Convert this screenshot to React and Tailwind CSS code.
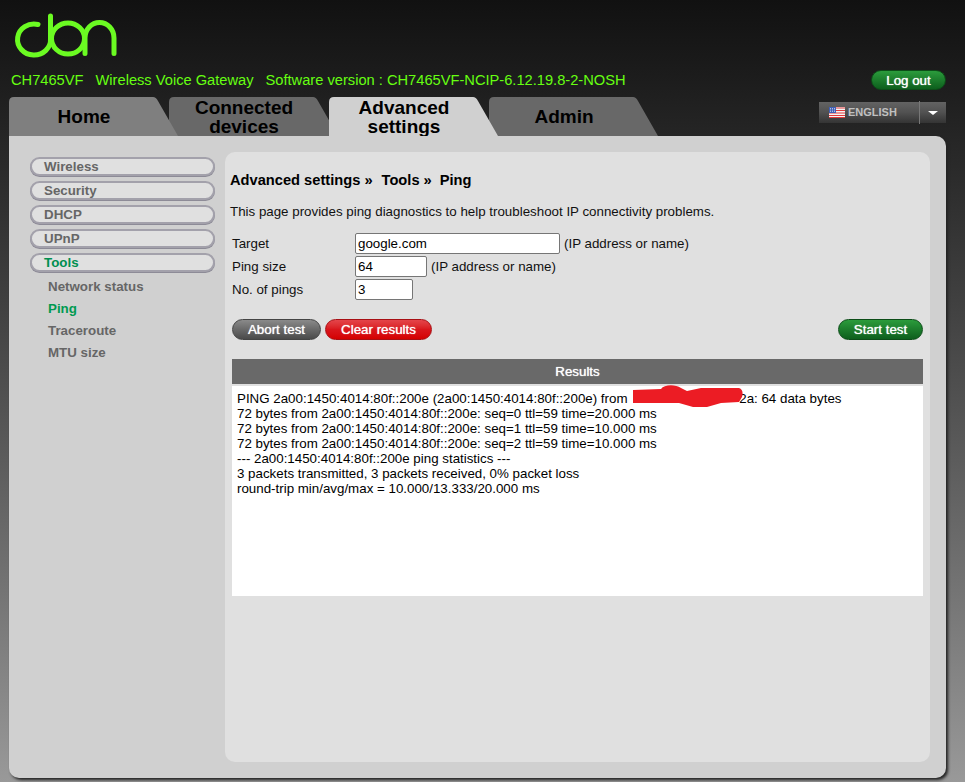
import React from "react";

const tabs = [
  { label: ["Home"], bg: "bg-[#7f7f7f]", z: "z-30" },
  { label: ["Connected", "devices"], bg: "bg-[#686868]", z: "z-20" },
  { label: ["Advanced", "settings"], bg: "bg-[#d0d0d0]", z: "z-40" },
  { label: ["Admin"], bg: "bg-[#686868]", z: "z-10" },
];

const sideItems = ["Wireless", "Security", "DHCP", "UPnP", "Tools"];
const subItems = ["Network status", "Ping", "Traceroute", "MTU size"];

const Logo = () => (
  <svg width="130" height="70" viewBox="0 0 130 70" fill="none" stroke="#6bfb22" strokeWidth="5" strokeLinecap="round">
    <path d="M38 24.5A16.5 15.5 0 1 0 50.5 38.5V16" />
    <ellipse cx="68" cy="38.5" rx="16.5" ry="15.5" />
    <path d="M85 53.5V38A14.5 15.5 0 0 1 114 38V53.5" />
  </svg>
);

const Flag = () => (
  <svg width="16" height="11" viewBox="0 0 16 11" className="shrink-0">
    <rect width="16" height="11" fill="#f4f4f4" />
    <path d="M0 1h16M0 3.5h16M0 6h16M0 8.5h16M0 10.5h16" stroke="#e0393a" strokeWidth="1.1" />
    <rect width="7" height="6" fill="#3f5fb5" />
    <path d="M1 1.5h5M1 3h5M1 4.5h5" stroke="#dfe6f5" strokeWidth="0.7" strokeDasharray="1 1" />
  </svg>
);

// red marker scribble that hides the address in the first result line
const Scribble = () => (
  <svg width="114" height="24" viewBox="0 0 114 24" className="absolute left-[399px] top-[-1px]">
    <path
      d="M2 5L30 4C33 -0.5 44 -1 50 3L56 6L70 3L108 3Q113 5 111 12L108 17L90 18L76 22L62 22L48 18L2 18Z"
      fill="#ec1c24"
    />
  </svg>
);

const PillButton = ({ className, children }) => (
  <button
    type="button"
    className={`h-[21px] rounded-full border pb-px text-[13.33px] text-white [text-shadow:0_0_1px_#fff] ${className}`}
  >
    {children}
  </button>
);

const FormRow = ({ label, value, inputWidth, hint }) => (
  <div className="flex h-[21px] items-center">
    <label className="w-[123px] text-[13.33px] text-[#111]">{label}</label>
    <input
      readOnly
      defaultValue={value}
      className={`h-[21px] rounded-[2px] border border-[#767676] bg-white px-[2px] text-[13.33px] text-black ${inputWidth}`}
    />
    {hint && <span className="ml-1 text-[13.33px] text-[#111]">{hint}</span>}
  </div>
);

export default function App() {
  return (
    <div className="h-[782px] w-full overflow-hidden bg-linear-to-b from-[#111111] to-[#999999] font-['Liberation_Sans',Arial,sans-serif]">
      <div className="h-[70px]">
        <Logo />
      </div>

      <div className="flex h-5 items-center justify-between pl-[11px] pr-[19px] text-[14.67px] text-[#66ff11]">
        <div className="flex gap-3">
          <span>CH7465VF</span>
          <span>Wireless Voice Gateway</span>
          <span>Software version : CH7465VF-NCIP-6.12.19.8-2-NOSH</span>
        </div>
        <button
          type="button"
          className="h-5 w-[75px] rounded-full border border-[#0c4d18] bg-linear-to-b from-[#2b9c3c] to-[#0d5f1d] pb-[3px] text-[13.33px] text-white [text-shadow:0_0_1px_#fff]"
        >
          Log out
        </button>
      </div>

      <div className="mt-[7px] flex h-[39px] pl-[9px] pr-[19px]">
        <div className="flex">
          {tabs.map((tab) => (
            <div
              key={tab.label[0]}
              className={`relative -mr-[9px] h-[39px] w-[169px] pr-[19px] text-center text-[19px] font-bold leading-[19px] text-black [clip-path:path('M0_39V5Q0_0_5_0H144Q147_0_149_4L169_39Z')] ${tab.bg} ${tab.z}`}
            >
              <div className="flex h-full flex-col items-center justify-center">
                {tab.label.map((line) => (
                  <span key={line}>{line}</span>
                ))}
              </div>
            </div>
          ))}
        </div>
        <div className="ml-auto mt-[5px] flex h-[21px] w-[127px] items-center bg-linear-to-b from-[#636363] via-[#515151] to-[#343434] text-[11px] font-bold text-[#c0c0c0]">
          <div className="flex w-[101px] items-center gap-[3px] border-r border-[#777] pl-[10px] leading-[23px]">
            <Flag />
            <span>ENGLISH</span>
          </div>
          <div className="ml-2 h-0 w-0 border-x-[5px] border-t-[4px] border-x-transparent border-t-white" />
        </div>
      </div>

      <div className="ml-[9px] flex h-[642px] w-[937px] gap-[10px] rounded-b-[10px] rounded-tr-[10px] bg-[#d0d0d0] pl-[21px] pt-4 shadow-[2px_2px_3px_#222]">
        <div className="w-[185px] pt-[5px]">
          <div className="flex flex-col gap-[5px]">
            {sideItems.map((item) => (
              <div
                key={item}
                className={`h-[19px] rounded-full border-2 border-[#a3a1ab] bg-[#e0e0e0] pl-3 text-[13.33px] font-bold leading-[16px] shadow-[0_1px_0_#8d8b97] ${item === "Tools" ? "text-[#008f50]" : "text-[#666666]"}`}
              >
                {item}
              </div>
            ))}
          </div>
          <div className="ml-[18px] mt-1">
            {subItems.map((item) => (
              <div key={item} className={`h-[22px] text-[13.33px] font-bold leading-[22px] ${item === "Ping" ? "text-[#009a50]" : "text-[#666666]"}`}>
                {item}
              </div>
            ))}
          </div>
        </div>

        <div className="h-[610px] w-[705px] rounded-[10px] bg-[#e0e0e0] px-[7px]">
          <div className="-ml-[2px] mt-[19px] flex gap-2 text-[14.67px] font-bold leading-[18px] text-black">
            <span>Advanced settings »</span>
            <span className="ml-px">Tools »</span>
            <span>Ping</span>
          </div>
          <p className="-ml-[2px] mt-[15px] text-[13.33px] leading-[15px] text-[#111]">
            This page provides ping diagnostics to help troubleshoot IP connectivity problems.
          </p>

          <div className="mt-[14px] flex flex-col gap-[2px]">
            <FormRow label="Target" value="google.com" inputWidth="w-[205px]" hint="(IP address or name)" />
            <FormRow label="Ping size" value="64" inputWidth="w-[72px]" hint="(IP address or name)" />
            <FormRow label="No. of pings" value="3" inputWidth="w-[58px]" />
          </div>

          <div className="mt-[19px] flex items-center gap-1">
            <PillButton className="w-[89px] border-[#444] bg-linear-to-b from-[#8a8a8a] to-[#4a4a4a]">Abort test</PillButton>
            <PillButton className="w-[107px] border-[#a80f14] bg-linear-to-b from-[#e4444a] via-[#d9151b] to-[#d40000]">Clear results</PillButton>
            <PillButton className="ml-auto w-[85px] border-[#0c4d18] bg-linear-to-b from-[#2b9c3c] to-[#0d5f1d]">Start test</PillButton>
          </div>

          <div className="mt-[19px] h-[25px] bg-[#696969] text-center text-[13.33px] leading-[25px] text-white [text-shadow:0_0_1px_#fff]">Results</div>
          <div className="relative mt-[2px] h-[210px] bg-white pl-[5px] pt-[5px] text-[13.33px] leading-[15px] text-black">
            <div>
              PING 2a00:1450:4014:80f::200e (2a00:1450:4014:80f::200e) from <span className="inline-block w-[108px]" />2a: 64 data bytes
            </div>
            <div>72 bytes from 2a00:1450:4014:80f::200e: seq=0 ttl=59 time=20.000 ms</div>
            <div>72 bytes from 2a00:1450:4014:80f::200e: seq=1 ttl=59 time=10.000 ms</div>
            <div>72 bytes from 2a00:1450:4014:80f::200e: seq=2 ttl=59 time=10.000 ms</div>
            <div>--- 2a00:1450:4014:80f::200e ping statistics ---</div>
            <div>3 packets transmitted, 3 packets received, 0% packet loss</div>
            <div>round-trip min/avg/max = 10.000/13.333/20.000 ms</div>
            <Scribble />
          </div>
        </div>
      </div>
    </div>
  );
}
